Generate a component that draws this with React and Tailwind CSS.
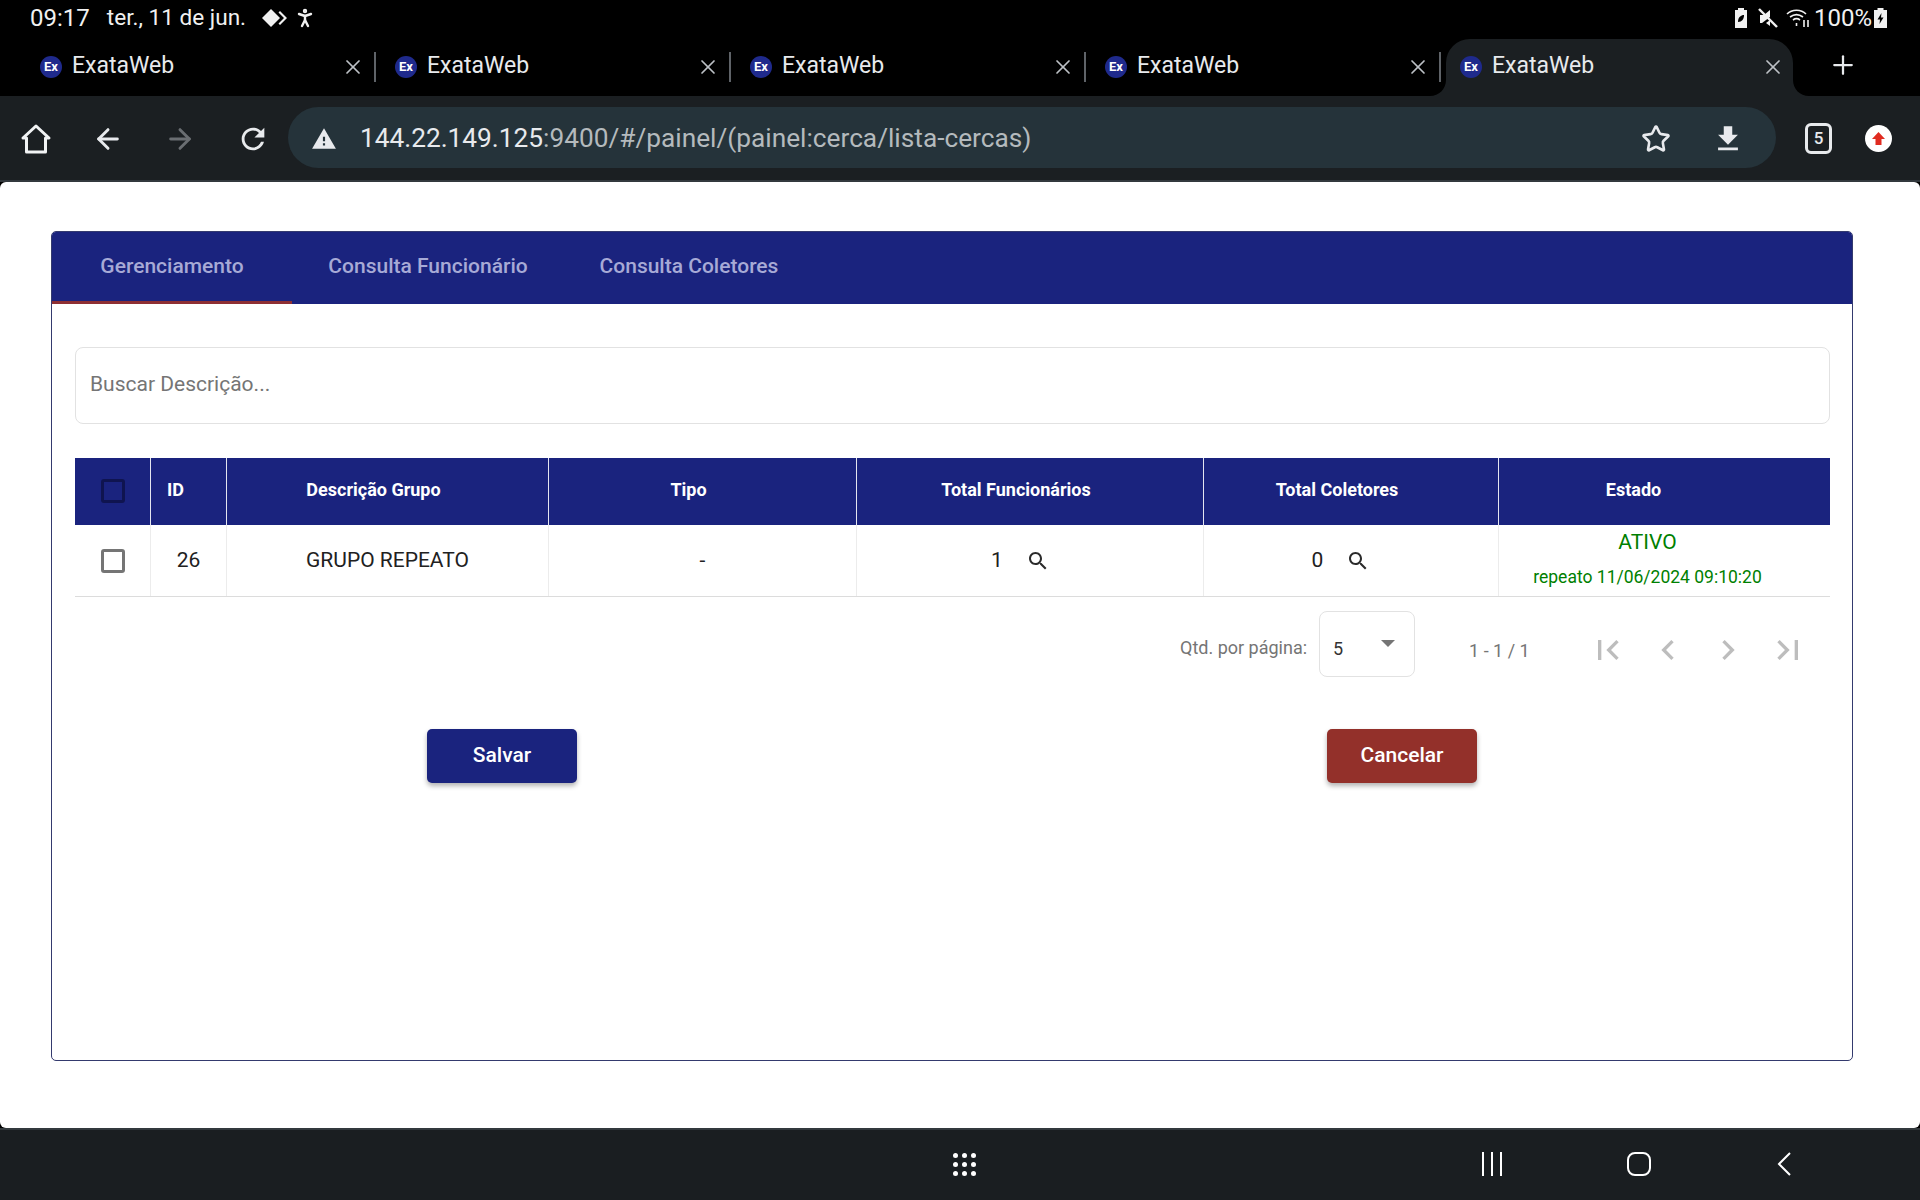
import { ArrowLeft, ArrowRight, PersonStanding, Plus, Star, X } from "lucide-react";

const NAVY = "bg-[#1a237e]";

function Favicon() {
  return (
    <span className="flex h-[22px] w-[22px] shrink-0 items-center justify-center rounded-full bg-[#1f2a8c] text-[13px] font-bold leading-none text-white">
      Ex
    </span>
  );
}

function Tab({ active }) {
  return (
    <div className="relative h-full w-[355px] shrink-0">
      {active ? (
        <div className="relative ml-[5px] flex h-full w-[347px] items-center rounded-t-[24px] bg-[#1b1f22] pb-[2px]">
          <svg className="absolute bottom-0 left-[-16px]" width="16" height="16" viewBox="0 0 16 16">
            <path d="M16 0V16H0C9 16 16 9 16 0Z" fill="#1b1f22" />
          </svg>
          <svg className="absolute bottom-0 right-[-16px]" width="16" height="16" viewBox="0 0 16 16">
            <path d="M0 0V16H16C7 16 0 9 0 0Z" fill="#1b1f22" />
          </svg>
          <TabBody />
        </div>
      ) : (
        <div className="ml-[5px] flex h-full w-[347px] items-center pb-[2px]">
          <TabBody />
          <span className="absolute right-0 top-[13px] h-[30px] w-[2px] bg-[#5f6368]" />
        </div>
      )}
    </div>
  );
}

function TabBody() {
  return (
    <>
      <span className="ml-[14px]">
        <Favicon />
      </span>
      <span className="ml-[10px] flex-1 text-[23px] text-[#e8eaed]">ExataWeb</span>
      <X className="mr-[8px] h-[24px] w-[24px] text-[#bdc1c6]" strokeWidth={1.7} />
    </>
  );
}

function MaterialIcon({ d, className }) {
  return (
    <svg viewBox="0 0 24 24" className={className} fill="currentColor">
      <path d={d} />
    </svg>
  );
}

function SearchIcon() {
  return (
    <MaterialIcon
      className="h-[24px] w-[24px] text-[#2b2b2b]"
      d="M15.5 14h-.79l-.28-.27C15.41 12.59 16 11.11 16 9.5 16 5.91 13.09 3 9.5 3S3 5.91 3 9.5 5.91 16 9.5 16c1.61 0 3.09-.59 4.23-1.57l.27.28v.79l5 4.99L20.49 19l-4.99-5zm-6 0C7.01 14 5 11.99 5 9.5S7.01 5 9.5 5 14 7.01 14 9.5 11.99 14 9.5 14z"
    />
  );
}

function HeaderCell({ children, className = "" }) {
  return (
    <div className={`flex items-center border-l border-[#e4e5f0] pb-[5px] text-[18px] font-bold text-white ${className}`}>
      {children}
    </div>
  );
}

function BodyCell({ children, className = "text-[#212121]" }) {
  return (
    <div className={`flex items-center border-l border-[#ececec] text-[21px] ${className}`}>
      {children}
    </div>
  );
}

export default function App() {
  return (
    <div className="flex h-[1200px] w-[1920px] flex-col overflow-hidden bg-black font-['Roboto',sans-serif]">
      {/* status bar */}
      <div className="flex h-[39px] shrink-0 items-center justify-between pb-[3px] pl-[30px] pr-[33px] text-[24px] text-[#f1f1f1]">
        <div className="flex items-center">
          <span>09:17</span>
          <span className="ml-[17px] text-[22.6px]">ter., 11 de jun.</span>
          <svg className="ml-[15px]" width="28" height="20" viewBox="0 0 28 20" fill="#f1f1f1">
            <path d="M10 1L19 10L10 19L1 10Z" />
            <path d="M19 3L26 10L19 17L17.5 15.5L23 10L17.5 4.5Z" />
          </svg>
          <PersonStanding className="ml-[4px] h-[24px] w-[24px]" strokeWidth={2.4} />
        </div>
        <div className="flex items-center">
          <svg width="14" height="20" viewBox="0 0 14 20" fill="#f1f1f1">
            <path d="M4 0H10V2H13V20H1V2H4Z" />
            <path d="M4 14C4 9 7 7 10 7C10 11 8 14 4 14Z" fill="#000" />
          </svg>
          <svg className="ml-[9px]" width="22" height="22" viewBox="0 0 22 22" fill="#f1f1f1">
            <path d="M3 8H7L13 3V10L5 16H3Z" />
            <path d="M9 16L13 13V19Z" />
            <path d="M2 2L20 20" stroke="#f1f1f1" strokeWidth="2.4" />
          </svg>
          <svg className="ml-[7px]" width="24" height="22" viewBox="0 0 24 22" fill="none" stroke="#f1f1f1" strokeWidth="1.6">
            <path d="M1 7C6 2 15 2 20 7" />
            <path d="M4 10C8 7 13 7 17 10" />
            <path d="M7 13C9 11.5 12 11.5 14 13" />
            <path d="M10.5 16V19M18 13V20M22 20V13" />
          </svg>
          <span className="ml-[4px]">100%</span>
          <svg className="ml-[2px]" width="13" height="20" viewBox="0 0 13 20" fill="#f1f1f1">
            <path d="M3.5 0H9.5V2H13V20H0V2H3.5Z" />
            <path d="M7.5 5L3.5 11.5H6L5.5 16L9.5 9.5H7Z" fill="#000" />
          </svg>
        </div>
      </div>

      {/* tab strip */}
      <div className="flex h-[57px] shrink-0 items-stretch pl-[21px]">
        <Tab />
        <Tab />
        <Tab />
        <Tab />
        <Tab active />
        <Plus className="ml-[32px] mt-[11px] h-[30px] w-[30px] text-[#e8eaed]" strokeWidth={1.8} />
      </div>

      {/* toolbar */}
      <div className="flex h-[86px] shrink-0 items-start border-b-2 border-[#33393d] bg-[#1b1f22] pt-[11px] text-[#e8eaed]">
        <div className="flex h-[61px] w-[288px] shrink-0 items-center pt-[2px]">
          <svg className="ml-[20px]" width="32" height="32" viewBox="0 0 32 32" fill="none" stroke="#f1f3f4" strokeWidth="3" strokeLinejoin="round">
            <path d="M16 3L29 15H25.5V29H6.5V15H3Z" />
          </svg>
          <ArrowLeft className="ml-[40px] h-[32px] w-[32px]" strokeWidth={2.2} />
          <ArrowRight className="ml-[40px] h-[32px] w-[32px] text-[#6a6e72]" strokeWidth={2.2} />
          <MaterialIcon
            className="ml-[40px] h-[34px] w-[34px]"
            d="M17.65 6.35C16.2 4.9 14.21 4 12 4c-4.42 0-7.99 3.58-7.99 8s3.57 8 7.99 8c3.73 0 6.84-2.55 7.73-6h-2.08c-.82 2.33-3.04 4-5.65 4-3.31 0-6-2.69-6-6s2.69-6 6-6c1.66 0 3.14.69 4.22 1.78L13 11h7V4l-2.35 2.35z"
          />
        </div>
        <div className="flex h-[61px] w-[1488px] shrink-0 items-center rounded-full bg-[#25333a] pt-[2px]">
          <MaterialIcon
            className="ml-[23px] h-[26px] w-[26px]"
            d="M1 21h22L12 2 1 21zm12-3h-2v-2h2v2zm0-4h-2v-4h2v4z"
          />
          <div className="ml-[23px] flex-1 text-[26.25px]">
            <span className="text-[#e8eaed]">144.22.149.125</span>
            <span className="text-[#b4babd]">:9400/#/painel/(painel:cerca/lista-cercas)</span>
          </div>
          <Star className="mr-[-1px] h-[30px] w-[30px]" strokeWidth={2.1} />
          <MaterialIcon
            className="ml-[41px] mr-[31px] h-[34px] w-[34px]"
            d="M19 9h-4V3H9v6H5l7 7 7-7zM5 18v2h14v-2H5z"
          />
        </div>
        <div className="flex h-[61px] flex-1 items-center pt-[2px]">
          <span className="ml-[29px] flex h-[31px] w-[27px] items-center justify-center rounded-[6px] border-[3px] border-[#e8eaed] text-[17px] font-medium leading-none">
            5
          </span>
          <span className="ml-[33px] flex h-[27px] w-[27px] items-center justify-center rounded-full bg-white">
            <svg width="15" height="15" viewBox="0 0 15 15" fill="#e02b20">
              <path d="M7.5 1L14 8H10.5V14H4.5V8H1Z" />
            </svg>
          </span>
        </div>
      </div>

      {/* page */}
      <div className="h-[946px] shrink-0 rounded-[6px] bg-white pl-[51px] pt-[49px]">
        <div className="h-[830px] w-[1802px] overflow-hidden rounded-[5px] border border-[#343a6e]">
          <div className={`flex h-[72px] ${NAVY} text-[21px] font-medium text-[#a7aad6]`}>
            <div className="flex w-[240px] items-center justify-center border-b-[3px] border-[#8e2f33]">Gerenciamento</div>
            <div className="flex w-[272px] items-center justify-center border-b-[3px] border-transparent">Consulta Funcionário</div>
            <div className="flex w-[250px] items-center justify-center border-b-[3px] border-transparent">Consulta Coletores</div>
          </div>

          <div className="pl-[23px] pt-[43px]">
            <div className="flex h-[77px] w-[1755px] items-center rounded-[8px] border border-[#e2e2e2] pb-[2px] pl-[14px] text-[21px] text-[#757575]">
              Buscar Descrição...
            </div>

            <div className={`mt-[34px] grid h-[67px] w-[1755px] grid-cols-[75px_76px_322px_308px_347px_295px_332px] ${NAVY}`}>
              <div className="flex items-center justify-center pb-[2px]">
                <span className="h-[24px] w-[24px] rounded-[3px] border-[3px] border-[#0f1450]" />
              </div>
              <HeaderCell className="pl-[16px]">ID</HeaderCell>
              <HeaderCell className="justify-center pr-[28px]">Descrição Grupo</HeaderCell>
              <HeaderCell className="justify-center pr-[28px]">Tipo</HeaderCell>
              <HeaderCell className="justify-center pr-[28px]">Total Funcionários</HeaderCell>
              <HeaderCell className="justify-center pr-[28px]">Total Coletores</HeaderCell>
              <HeaderCell className="justify-center pr-[62px]">Estado</HeaderCell>
            </div>

            <div className="grid h-[72px] w-[1755px] grid-cols-[75px_76px_322px_308px_347px_295px_332px] border-b border-[#dcdcdc]">
              <div className="flex items-center justify-center">
                <span className="h-[24px] w-[24px] rounded-[3px] border-[3px] border-[#757575]" />
              </div>
              <BodyCell className="justify-center text-[#212121]">26</BodyCell>
              <BodyCell className="justify-center text-[#212121]">GRUPO REPEATO</BodyCell>
              <BodyCell className="justify-center text-[#212121]">-</BodyCell>
              <BodyCell className="justify-center gap-[23px] pr-[19px] text-[#212121]">
                1 <SearchIcon />
              </BodyCell>
              <BodyCell className="justify-center gap-[23px] pr-[20px] text-[#212121]">
                0 <SearchIcon />
              </BodyCell>
              <BodyCell className="flex-col justify-start pr-[34px] pt-[2px] text-[#008000]">
                <span className="text-[21px] leading-[30px]">ATIVO</span>
                <span className="mt-[10px] text-[17.5px] leading-[20px]">repeato 11/06/2024 09:10:20</span>
              </BodyCell>
            </div>

            <div className="mt-[14px] flex h-[66px] items-center">
              <span className="ml-[1105px] mt-[7px] text-[18px] text-[#757575]">Qtd. por página:</span>
              <div className="ml-[12px] flex h-[66px] w-[96px] items-center justify-between rounded-[8px] border border-[#e2e2e2] pl-[13px] pr-[19px] text-[18px] text-[#333]">
                <span className="mt-[8px]">5</span>
                <span className="mb-[1px] h-0 w-0 border-x-[7px] border-t-[7px] border-x-transparent border-t-[#757575]" />
              </div>
              <span className="ml-[54px] mt-[12px] text-[18px] text-[#757575]">1 - 1 / 1</span>
              <div className="ml-[58px] mt-[12px] flex gap-[20px] text-[#bdbdbd]">
                <MaterialIcon className="h-[40px] w-[40px]" d="M18.41 16.59L13.82 12l4.59-4.59L17 6l-6 6 6 6zM6 6h2v12H6z" />
                <MaterialIcon className="h-[40px] w-[40px]" d="M15.41 7.41L14 6l-6 6 6 6 1.41-1.41L10.83 12z" />
                <MaterialIcon className="h-[40px] w-[40px]" d="M10 6L8.59 7.41 13.17 12l-4.58 4.59L10 18l6-6z" />
                <MaterialIcon className="h-[40px] w-[40px]" d="M5.59 7.41L10.18 12l-4.59 4.59L7 18l6-6-6-6zM16 6h2v12h-2z" />
              </div>
            </div>
          </div>

          <div className="mt-[52px] grid grid-cols-2 justify-items-center">
            <button className={`h-[54px] w-[150px] rounded-[5px] ${NAVY} pb-[1px] text-[21px] font-medium text-white shadow-[0_3px_5px_rgba(0,0,0,0.3)]`}>
              Salvar
            </button>
            <button className="h-[54px] w-[150px] rounded-[5px] bg-[#93302a] pb-[1px] text-[21px] font-medium text-white shadow-[0_3px_5px_rgba(0,0,0,0.3)]">
              Cancelar
            </button>
          </div>
        </div>
      </div>

      {/* android nav */}
      <div className="flex h-[72px] shrink-0 items-center border-t-2 border-[#33393d] bg-[#1a1e21] pb-[2px]">
        <div className="ml-[953px] grid grid-cols-3 gap-x-[4px] gap-y-[4px]">
          {[0, 1, 2, 3, 4, 5, 6, 7, 8].map((i) => (
            <span key={i} className="h-[5px] w-[5px] rounded-full bg-white" />
          ))}
        </div>
        <div className="ml-[506px] flex h-[24px] w-[20px] justify-between">
          <span className="w-[2px] bg-white" />
          <span className="w-[2px] bg-white" />
          <span className="w-[2px] bg-white" />
        </div>
        <span className="ml-[125px] h-[24px] w-[24px] rounded-[8px] border-2 border-white" />
        <svg className="ml-[125px]" width="16" height="26" viewBox="0 0 16 26" fill="none" stroke="#fff" strokeWidth="2">
          <path d="M14 2L3 13L14 24" />
        </svg>
      </div>
    </div>
  );
}
